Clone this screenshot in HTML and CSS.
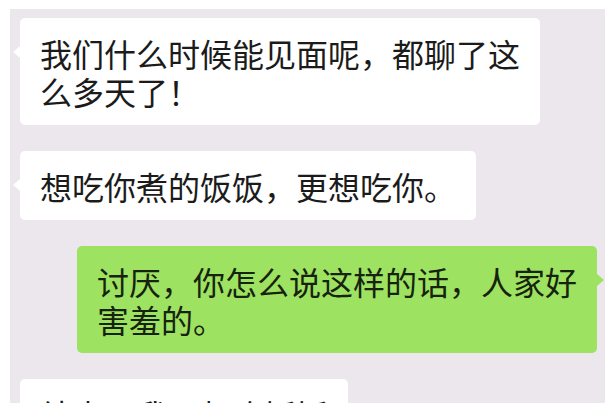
FILE: index.html
```html
<!DOCTYPE html>
<html lang="zh-CN">
  <head>
    <meta charset="UTF-8" />
    <meta name="viewport" content="width=device-width, initial-scale=1.0" />
    <title>聊天记录</title>
    <link rel="stylesheet" href="styles.css">
  </head>
  <body>
    <div class="chat">
      <div class="bubble left">我们什么时候能见面呢，都聊了这么多天了！</div>
      <div class="bubble left">想吃你煮的饭饭，更想吃你。</div>
      <div class="bubble right">讨厌，你怎么说这样的话，人家好害羞的。</div>
      <div class="bubble left">结束，我只想吃饭饭</div>
    </div>
  </body>
</html>
```

FILE: styles.css
```css
body {
  margin: 0;
  background-color: #ffffff;
  font-family: "Noto Sans CJK SC", "Noto Sans", sans-serif;
}
.chat {
  margin: 9px 10px 0 10px;
  height: 394px;
  padding: 9px 8px 0 10px;
  box-sizing: border-box;
  background-color: #ebe7ed;
  overflow: hidden;
  display: flex;
  flex-direction: column;
  align-items: flex-start;
  gap: 26px;
}
.bubble {
  position: relative;
  flex-shrink: 0;
  max-width: 520px;
  box-sizing: border-box;
  padding: 16px 20px 15px;
  border-radius: 5px;
  font-size: 32px;
  line-height: 38px;
  color: #1b1b1b;
}
.left {
  background-color: #ffffff;
}
.right {
  align-self: flex-end;
  background-color: #9de260;
  color: #17220f;
}
.left::before,
.right::after {
  content: "";
  position: absolute;
  top: 28px;
  border-top: 6px solid transparent;
  border-bottom: 6px solid transparent;
}
.left::before {
  left: -7px;
  border-right: 7px solid #ffffff;
}
.right::after {
  right: -7px;
  border-left: 7px solid #9de260;
}
```
